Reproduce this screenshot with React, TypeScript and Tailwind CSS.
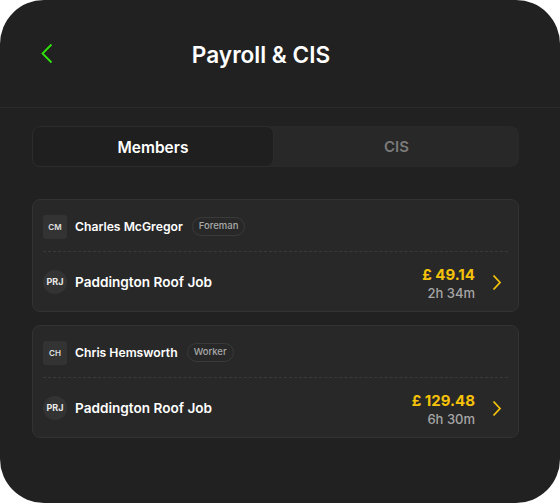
import React from "react";

type Item = { initials: string; name: string; role: string; amount: string; time: string };

const items: Item[] = [
  { initials: "CM", name: "Charles McGregor", role: "Foreman", amount: "£ 49.14", time: "2h 34m" },
  { initials: "CH", name: "Chris Hemsworth", role: "Worker", amount: "£ 129.48", time: "6h 30m" },
];

function Card({ item }: { item: Item }) {
  return (
    <div className="rounded-lg border border-[#333333] bg-[#282828] px-[10px]">
      <div className="flex h-[52px] items-center gap-2 border-b border-dashed border-[#3a3a3a] pt-[2px]">
        <div className="flex h-6 w-6 items-center justify-center rounded-[3px] bg-[#333333] text-[8px] font-semibold text-[#e0e0e0]">
          {item.initials}
        </div>
        <span className="pt-[1px] text-[12.2px] font-semibold text-white">{item.name}</span>
        <span className="ml-[1px] rounded-full border border-[#3a3a3a] px-[6px] py-[1px] text-[9.5px] font-medium text-[#a8a8a8]">
          {item.role}
        </span>
      </div>
      <div className="flex h-[59px] items-center gap-2 pt-[1px]">
        <div className="flex h-6 w-6 items-center justify-center rounded-full bg-[#333333] text-[9px] font-bold text-[#e8e8e8]">
          PRJ
        </div>
        <span className="flex-1 text-[13.6px] font-semibold text-white">Paddington Roof Job</span>
        <div className="flex flex-col items-end pt-[3px] leading-none">
          <span className="text-[15px] font-bold text-[#f5c20a]">{item.amount}</span>
          <span className="mt-[5px] text-[13px] font-medium text-[#a6a6a6]">{item.time}</span>
        </div>
        <svg width="10" height="17" viewBox="0 0 10 17" className="ml-[9px] mr-[6px]">
          <polyline points="1.5,1.5 8,8.5 1.5,15.5" fill="none" stroke="#f5c20a" strokeWidth="1.8" />
        </svg>
      </div>
    </div>
  );
}

export default function App() {
  return (
    <div className="h-[503px] w-[560px] bg-white" style={{ fontFamily: "Inter, 'Noto Sans', sans-serif" }}>
      <div className="h-full w-full overflow-hidden rounded-[44px] bg-[#212121]">
        <div className="relative flex h-[108px] items-center justify-center border-b border-[#2a2a2a] pr-[38px] pt-[2px]">
          <svg width="14" height="22" viewBox="0 0 14 22" className="absolute left-[40px] top-[43px]">
            <polyline points="11.5,1.5 2.5,10.5 11.5,19.5" fill="none" stroke="#2ee60a" strokeWidth="1.8" />
          </svg>
          <h1 className="text-[22.6px] font-semibold text-white">Payroll &amp; CIS</h1>
        </div>
        <div className="pl-8 pr-[41px] pt-[18px]">
          <div className="flex h-[41px] rounded-lg bg-[#282828]">
            <div className="flex w-[242px] items-center justify-center rounded-lg border border-[#2c2c2c] bg-[#1f1f1f] pt-[2px] text-[15.5px] font-semibold text-white">
              Members
            </div>
            <div className="flex flex-1 items-center justify-center pt-[2px] text-[15px] font-semibold text-[#7a7a7a]">
              CIS
            </div>
          </div>
          <div className="mt-[32px] flex flex-col gap-[13px]">
            {items.map((it) => (
              <Card key={it.name} item={it} />
            ))}
          </div>
        </div>
      </div>
    </div>
  );
}
